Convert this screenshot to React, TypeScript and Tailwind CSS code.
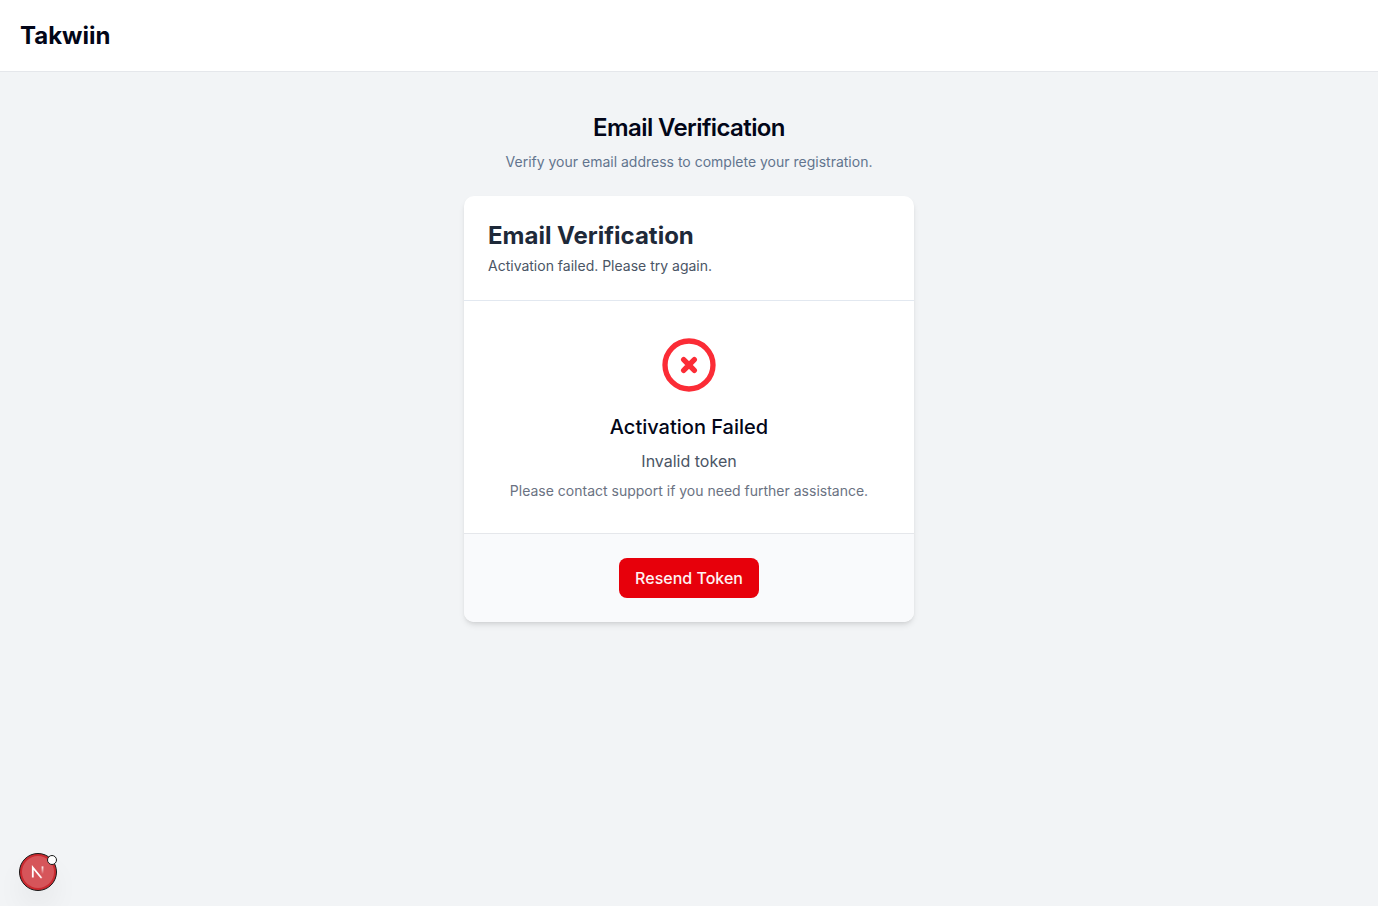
import React from "react";
import { HiOutlineXCircle } from "react-icons/hi";

function Header() {
  return (
    <header className="flex h-[72px] items-center border-b border-gray-200 bg-white px-5">
      <a href="#" className="text-2xl font-bold">
        Takwiin
      </a>
    </header>
  );
}

function VerificationCard() {
  return (
    <section className="w-full max-w-[450px] overflow-hidden rounded-[10px] bg-white shadow-md">
      <div className="border-b border-slate-200 p-6">
        <h2 className="text-2xl font-bold text-gray-800">Email Verification</h2>
        <p className="mt-1 text-sm text-gray-600">Activation failed. Please try again.</p>
      </div>
      <div className="flex flex-col items-center px-6 py-8 text-center">
        <HiOutlineXCircle className="size-16 text-[#fb2c36]" aria-hidden="true" />
        <h3 className="mt-4 text-xl font-medium">Activation Failed</h3>
        <p className="mt-2 text-base text-gray-600">Invalid token</p>
        <p className="mt-2 text-sm text-gray-500">
          Please contact support if you need further assistance.
        </p>
      </div>
      <div className="flex justify-center border-t border-gray-200 bg-[#f9fafc] p-6">
        <button
          type="button"
          className="rounded-lg bg-[#e7000b] px-4 py-2 text-base font-medium text-red-50"
        >
          Resend Token
        </button>
      </div>
    </section>
  );
}

function DevIndicator() {
  return (
    <button
      type="button"
      aria-label="Open developer tools"
      className="fixed bottom-[15px] left-[19px] size-[38px] rounded-full shadow-[0_16px_32px_-8px_rgba(0,0,0,0.14)]"
    >
      <svg viewBox="0 0 38 38" className="size-full overflow-visible" fill="none">
        <defs>
          <linearGradient id="diagonal" x1="20" y1="20" x2="24.5" y2="26" gradientUnits="userSpaceOnUse">
            <stop stopColor="#fff" />
            <stop offset="0.6" stopColor="#fff" stopOpacity="0.9" />
            <stop offset="1" stopColor="#fff" stopOpacity="0" />
          </linearGradient>
          <linearGradient id="stem" x1="23" y1="13" x2="23" y2="21" gradientUnits="userSpaceOnUse">
            <stop stopColor="#fff" />
            <stop offset="1" stopColor="#fff" stopOpacity="0" />
          </linearGradient>
        </defs>
        <circle cx="19" cy="19" r="18.5" fill="#ca2a30" stroke="#171717" />
        <circle cx="19" cy="19" r="16" fill="#d6555a" />
        <path d="M13.8 24.6V14.4l8.9 10.8" stroke="url(#diagonal)" strokeWidth="1.8" />
        <path d="M23.5 13.4v8" stroke="url(#stem)" strokeWidth="1.8" />
        <circle cx="33" cy="7" r="4.5" fill="#fff" stroke="#171717" />
      </svg>
    </button>
  );
}

export default function App() {
  return (
    <div className="min-h-screen bg-[#f2f4f6] font-['Inter',sans-serif] text-[#020618] antialiased">
      <Header />
      <main className="flex flex-col items-center px-4 py-10">
        <h1 className="text-2xl font-semibold tracking-tight">Email Verification</h1>
        <p className="mt-2 mb-6 text-sm text-slate-500">
          Verify your email address to complete your registration.
        </p>
        <VerificationCard />
      </main>
      <DevIndicator />
    </div>
  );
}
